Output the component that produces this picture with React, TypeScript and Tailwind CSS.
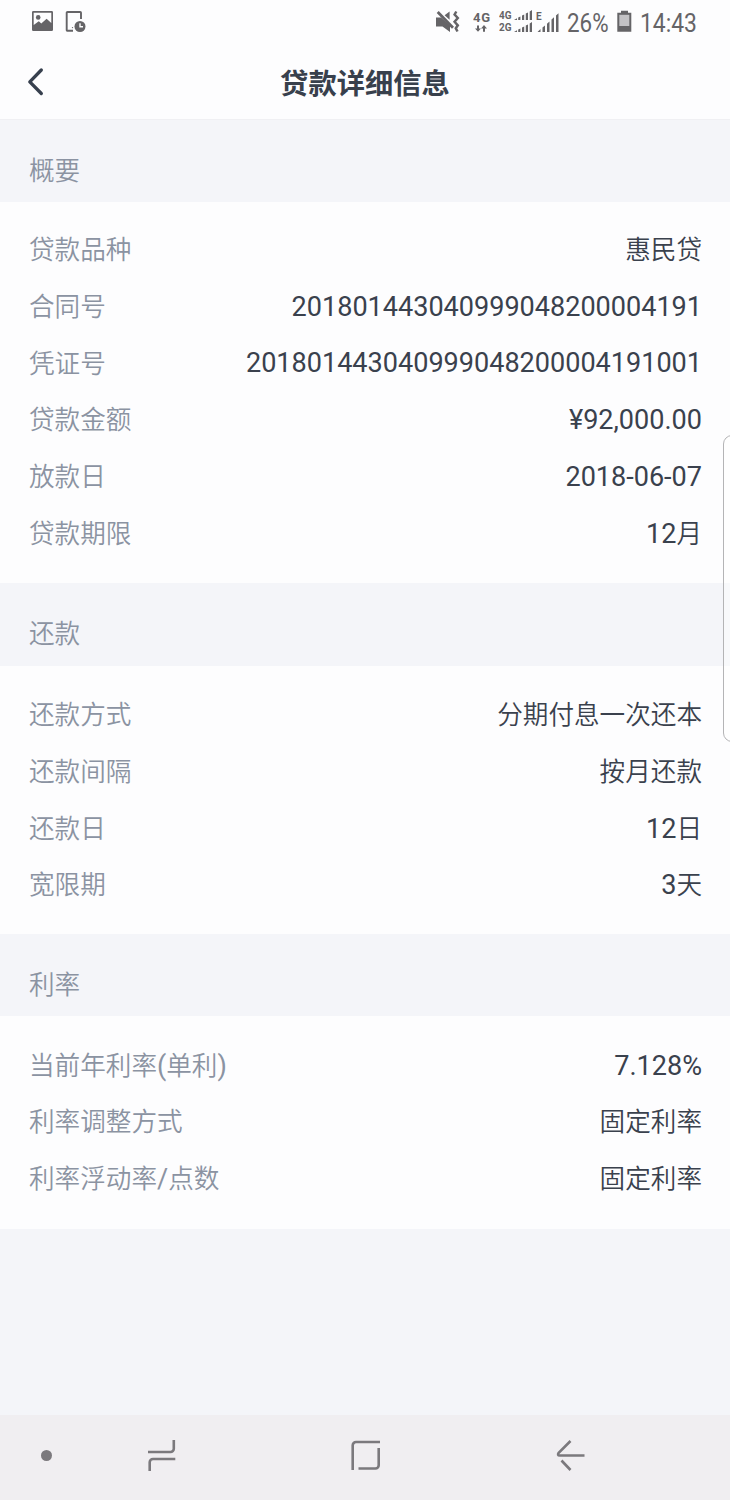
import { Fragment } from 'react';
import clsx from 'clsx';

// ---------------------------------------------------------------------------
// Data
// ---------------------------------------------------------------------------

interface DetailRow {
  label: string;
  value: string;
}

interface DetailSection {
  title: string;
  rows: DetailRow[];
  // Height and top padding of the list
  box: string;
}

const SECTIONS: DetailSection[] = [
  {
    title: '概要',
    box: 'h-[381px] pt-[19.7px]',
    rows: [
      { label: '贷款品种', value: '惠民贷' },
      { label: '合同号', value: '201801443040999048200004191' },
      { label: '凭证号', value: '201801443040999048200004191001' },
      { label: '贷款金额', value: '¥92,000.00' },
      { label: '放款日', value: '2018-06-07' },
      { label: '贷款期限', value: '12月' },
    ],
  },
  {
    title: '还款',
    box: 'h-[268px] pt-[21.5px]',
    rows: [
      { label: '还款方式', value: '分期付息一次还本' },
      { label: '还款间隔', value: '按月还款' },
      { label: '还款日', value: '12日' },
      { label: '宽限期', value: '3天' },
    ],
  },
  {
    title: '利率',
    box: 'h-[213px] pt-[21.5px]',
    rows: [
      { label: '当前年利率(单利)', value: '7.128%' },
      { label: '利率调整方式', value: '固定利率' },
      { label: '利率浮动率/点数', value: '固定利率' },
    ],
  },
];

// ---------------------------------------------------------------------------
// Text
// ---------------------------------------------------------------------------

// Latin runs are set slightly larger than the Chinese glyphs around them
function MixedText({ text }: { text: string }) {
  const runs = text.match(/[\u0020-\u00ff]+|[^\u0020-\u00ff]+/g) ?? [];
  return (
    <span className="text-[25.6px] font-[350] whitespace-nowrap">
      {runs.map((run, i) => (
        <Fragment key={i}>
          {/^[\u0020-\u00ff]/.test(run) ? <span className="text-[27.05px] font-normal">{run}</span> : run}
        </Fragment>
      ))}
    </span>
  );
}

// ---------------------------------------------------------------------------
// Status bar
// ---------------------------------------------------------------------------

function SignalBars() {
  return (
    <svg width="18" height="10" viewBox="0 0 18 10" fill="currentColor">
      <path d="M0 10 3 8.2V10ZM4.2 7.6 6.4 6.6V10H4.2ZM8 5.6 10.2 4.6V10H8ZM11.8 3.6 14 2.5V10h-2.2ZM15.7 1.4 18 0V10h-2.3Z" />
    </svg>
  );
}

function StatusBar() {
  return (
    <div className="flex h-[44px] items-start pt-[10px] pl-8 text-[#656467]">
      <svg width="21" height="22" viewBox="0 0 21 22" fill="currentColor">
        <path
          fillRule="evenodd"
          d="M1.3 1H19.7A1.3 1.3 0 0 1 21 2.3V19.7A1.3 1.3 0 0 1 19.7 21H1.3A1.3 1.3 0 0 1 0 19.7V2.3A1.3 1.3 0 0 1 1.3 1ZM1.7 2.7V15L6.8 11.2 9.3 13.4 14.6 8.8 19.3 12.9V2.7Z"
        />
        <circle cx="6.2" cy="7.4" r="2.3" />
      </svg>
      <svg width="21" height="22" viewBox="0 0 21 22" className="ml-3">
        <path d="M8 20.8H2.5a.8.8 0 0 1-.8-.8V2.8a.8.8 0 0 1 .8-.8H15.2a.8.8 0 0 1 .8.8V9" fill="none" stroke="currentColor" strokeWidth="1.9" />
        <circle cx="7.5" cy="17.6" r=".7" fill="currentColor" />
        <circle cx="15" cy="16.5" r="5.5" fill="currentColor" />
        <path d="M15 13.2V16.8H18" fill="none" stroke="#fdfdfe" strokeWidth="1.4" />
      </svg>

      {/* Right cluster */}
      <svg width="24" height="23" viewBox="0 0 24 23" className="ml-[350px]" fill="currentColor">
        <path d="M0 7.5H5L14 15.5V22L6.5 16.5H0ZM8.6 5.3 13.6 1.5V9.8Z" />
        <path d="M1.7 2 17 17.8" stroke="currentColor" strokeWidth="2.8" />
        <path d="M20.3 1.5 18.6 4.5 21.8 8 18.6 11.8 21.8 15.3 19.8 18.3 21.5 21.5" fill="none" stroke="currentColor" strokeWidth="2.5" />
      </svg>
      <svg width="18" height="23" viewBox="0 0 18 23" className="ml-[13px]" fill="currentColor">
        <text x="0" y="11.6" textLength="17" className="text-[13px] font-bold">4G</text>
        <path d="M4 15.5h2v3h2L5 21.7 2 18.5h2ZM10 21.7V18.5H8L11 15 14 18.5h-2v3.2Z" />
      </svg>
      <svg width="13" height="23" viewBox="0 0 13 23" className="ml-2" fill="currentColor">
        <text x="0" y="9.3" textLength="12.5" lengthAdjust="spacingAndGlyphs" className="text-[10px] font-bold">4G</text>
        <text x="0" y="21.3" textLength="12.5" lengthAdjust="spacingAndGlyphs" className="text-[10px] font-bold">2G</text>
      </svg>
      <div className="ml-[2px] flex flex-col gap-[2px]">
        <SignalBars />
        <SignalBars />
      </div>
      <svg width="26" height="22" viewBox="0 0 26 22" className="ml-[4px]" fill="currentColor">
        <text x="0" y="10" className="text-[10px] font-bold">E</text>
        <path d="M1.5 22 4.5 19V22ZM6.5 17.5 9 15.5V22H6.5ZM11 13.7 13.5 11.5V22H11ZM15.5 9.5 18 7.3V22h-2.5ZM20 5.5 22.5 3.3V22H20Z" />
      </svg>
      <div className="w-[55px] pl-[5px]">
        <span className="inline-block origin-left scale-x-[0.86] text-[26px] leading-[26px]">26%</span>
      </div>
      <svg width="15" height="22" viewBox="0 0 15 22">
        <path d="M4 .8h7v2h3.3V21.8H.3V2.8H4Z" fill="currentColor" />
        <path d="M2.3 4.8h10V16h-10Z" fill="#c3c2c5" />
      </svg>
      <div className="ml-[8px] w-[60px]">
        <span className="inline-block origin-left scale-x-[0.88] text-[26px] leading-[26px]">14:43</span>
      </div>
    </div>
  );
}

// ---------------------------------------------------------------------------
// Page parts
// ---------------------------------------------------------------------------

function TitleBar() {
  return (
    <header className="grid h-[75px] grid-cols-[100px_1fr_100px] items-center">
      <button type="button" aria-label="返回" className="pl-[27px]">
        <svg width="18" height="30" viewBox="0 0 18 30" fill="none" stroke="#37404e" strokeWidth="3.3" strokeLinecap="round" strokeLinejoin="round">
          <path d="M14.3 3 2.8 14.8 14.3 26.5" />
        </svg>
      </button>
      <h1 className="pt-[8px] text-center text-[28.3px] font-bold text-[#38404c]">贷款详细信息</h1>
    </header>
  );
}

function Section({ title, rows, box }: DetailSection) {
  return (
    <section>
      <h2 className="flex h-[82.33px] items-center bg-[#f4f5f9] px-[29px] pt-[20px] text-[25.6px] font-[350] text-[#8b93a2]">
        {title}
      </h2>
      <dl className={clsx('flex flex-col bg-[#fdfdfe]', box)}>
        {rows.map((row) => (
          <div key={row.label} className="flex h-[56.7px] shrink-0 items-center justify-between pr-[28px] pl-[29px]">
            <dt className="text-[#8b93a2]">
              <MixedText text={row.label} />
            </dt>
            <dd className="text-[#3a414d]">
              <MixedText text={row.value} />
            </dd>
          </div>
        ))}
      </dl>
    </section>
  );
}

function NavigationBar() {
  return (
    <nav className="flex h-[85px] items-start bg-[#f0eef1] pt-[24px] pl-[41px] text-[#7b797d]">
      <span className="mt-[11px] size-[11px] rounded-full bg-current" />
      <svg width="28" height="34" viewBox="0 0 28 34" className="ml-24" fill="none" stroke="currentColor" strokeWidth="2.6">
        <path d="M0 13H22.5a3.3 3.3 0 0 0 3.3-3.3V1M27.3 20H5a3.3 3.3 0 0 0-3.3 3.3V32" />
      </svg>
      <svg width="30" height="34" viewBox="0 0 30 34" className="ml-[175px]" fill="none" stroke="currentColor" strokeWidth="2.6">
        <path d="M1.7 31V6.3A3.3 3.3 0 0 1 5 3H29M27.7 9V26.2a3.3 3.3 0 0 1-3.3 3.3H7.5" />
      </svg>
      <svg width="29" height="34" viewBox="0 0 29 34" className="ml-[175px]" fill="none" stroke="currentColor" strokeWidth="2.6">
        <path d="M14.5 2 2.7 13.8Q1 16.5 3.7 16.5H28.5M5.5 21.5 14.5 31" />
      </svg>
    </nav>
  );
}

export default function App() {
  return (
    <div className="relative flex h-[1500px] w-[730px] flex-col overflow-hidden bg-[#f4f5f9] font-['Roboto','Noto_Sans_CJK_SC',sans-serif]">
      <div className="border-b border-[#f0f0f3] bg-[#fdfdfe]">
        <StatusBar />
        <TitleBar />
      </div>
      <main className="flex-1">
        {SECTIONS.map((section) => (
          <Section key={section.title} {...section} />
        ))}
      </main>
      <NavigationBar />

      {/* Edge panel handle */}
      <div className="absolute top-[435px] -right-3 h-[307px] w-[19px] rounded-[9px] border border-[#b4b4b6] bg-white/40" />
    </div>
  );
}
